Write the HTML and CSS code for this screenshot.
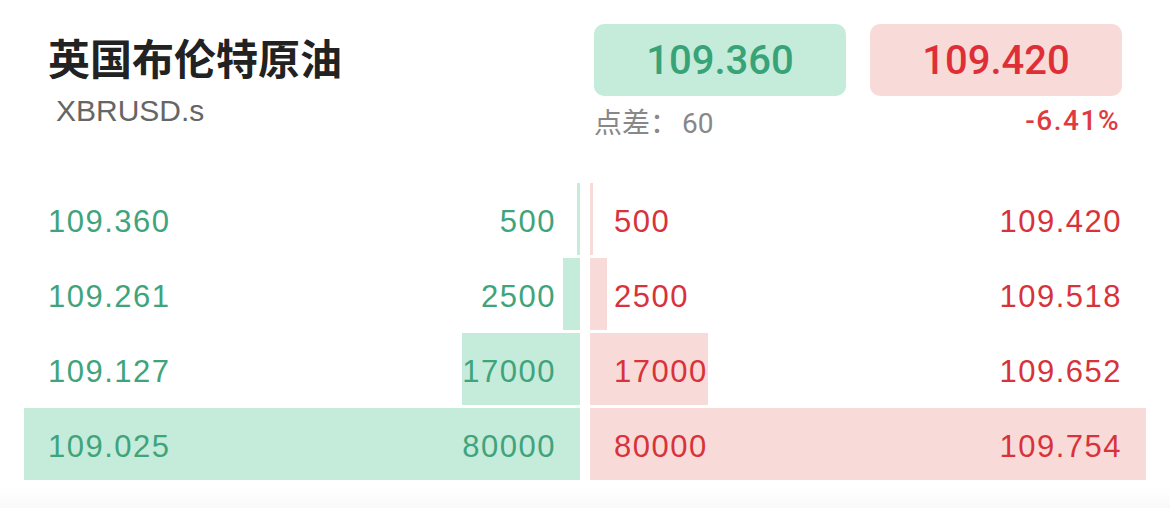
FILE: index.html
```html
<!DOCTYPE html>
<html lang="zh-CN">
<head>
    <meta charset="UTF-8">
    <meta name="viewport" content="width=device-width, initial-scale=1.0">
    <title>英国布伦特原油</title>
    <link rel="stylesheet" href="styles.css">
</head>
<body>
    <header class="header">
        <div class="symbol">
            <h1 class="symbol-name">英国布伦特原油</h1>
            <div class="symbol-code">XBRUSD.s</div>
        </div>
        <div class="quote">
            <div class="prices">
                <div class="price bid">109.360</div>
                <div class="price ask">109.420</div>
            </div>
            <div class="quote-meta">
                <span class="spread">点差：<span class="spread-num">60</span></span>
                <span class="change">-6.41%</span>
            </div>
        </div>
    </header>

    <main class="book">
        <div class="row">
            <div class="side bid-side">
                <div class="bar" style="width: 0.625%"></div>
                <span class="num">109.360</span>
                <span class="num">500</span>
            </div>
            <div class="side ask-side">
                <div class="bar" style="width: 0.625%"></div>
                <span class="num">500</span>
                <span class="num">109.420</span>
            </div>
        </div>
        <div class="row">
            <div class="side bid-side">
                <div class="bar" style="width: 3.125%"></div>
                <span class="num">109.261</span>
                <span class="num">2500</span>
            </div>
            <div class="side ask-side">
                <div class="bar" style="width: 3.125%"></div>
                <span class="num">2500</span>
                <span class="num">109.518</span>
            </div>
        </div>
        <div class="row">
            <div class="side bid-side">
                <div class="bar" style="width: 21.25%"></div>
                <span class="num">109.127</span>
                <span class="num">17000</span>
            </div>
            <div class="side ask-side">
                <div class="bar" style="width: 21.25%"></div>
                <span class="num">17000</span>
                <span class="num">109.652</span>
            </div>
        </div>
        <div class="row">
            <div class="side bid-side">
                <div class="bar" style="width: 100%"></div>
                <span class="num">109.025</span>
                <span class="num">80000</span>
            </div>
            <div class="side ask-side">
                <div class="bar" style="width: 100%"></div>
                <span class="num">80000</span>
                <span class="num">109.754</span>
            </div>
        </div>
    </main>
    <div class="fade"></div>
</body>
</html>
```
FILE: styles.css
```css
body {
    font-family: "Liberation Sans", Arial, "Noto Sans CJK SC", sans-serif;
    margin: 0;
    padding: 0;
    background-color: #fff;
    color: #222;
}
.header {
    display: flex;
    justify-content: space-between;
    padding: 24px 48px 0 48px;
}
.symbol {
    padding-top: 8px;
}
.symbol-name {
    margin: 0;
    font-family: "Noto Sans CJK SC", sans-serif;
    font-size: 42px;
    line-height: 50px;
    font-weight: 700;
    color: #222;
}
.symbol-code {
    margin-top: 11px;
    margin-left: 8px;
    font-size: 30px;
    line-height: 36px;
    color: #666;
}
.quote {
    width: 528px;
}
.prices {
    display: grid;
    grid-template-columns: 1fr 1fr;
    gap: 24px;
}
.price {
    height: 72px;
    border-radius: 10px;
    display: flex;
    align-items: center;
    justify-content: center;
    font-family: Roboto, sans-serif;
    font-size: 40px;
    font-weight: 500;
}
.price.bid {
    background-color: #c5ebdb;
    color: #38a377;
}
.price.ask {
    background-color: #f8dad8;
    color: #df2f36;
}
.quote-meta {
    display: flex;
    justify-content: space-between;
    margin-top: 8px;
    font-size: 28px;
    line-height: 34px;
}
.spread {
    font-family: "Noto Sans CJK SC", sans-serif;
    color: #888;
}
.spread-num {
    font-family: Roboto, sans-serif;
    margin-left: 4px;
}
.change {
    font-family: Roboto, sans-serif;
    font-weight: 500;
    color: #df3a40;
    letter-spacing: 1.5px;
    padding-right: 2px;
}
.book {
    display: flex;
    flex-direction: column;
    gap: 3px;
    margin: 42px 24px 0 24px;
}
.row {
    display: grid;
    grid-template-columns: 1fr 1fr;
    gap: 10px;
    height: 72px;
}
.side {
    position: relative;
    display: flex;
    justify-content: space-between;
    align-items: center;
    padding: 5px 24px 0 24px;
    font-size: 31px;
    letter-spacing: 1.5px;
}
.side .num {
    position: relative;
}
.bar {
    position: absolute;
    top: 0;
    bottom: 0;
}
.bid-side {
    color: #3fa47c;
}
.bid-side .bar {
    right: 0;
    background-color: #c5ebdb;
}
.ask-side {
    color: #d8323b;
}
.ask-side .bar {
    left: 0;
    background-color: #f8dad8;
}
.fade {
    height: 20px;
    margin-top: 8px;
    background: linear-gradient(#fff, #f9f9f9);
}
```
